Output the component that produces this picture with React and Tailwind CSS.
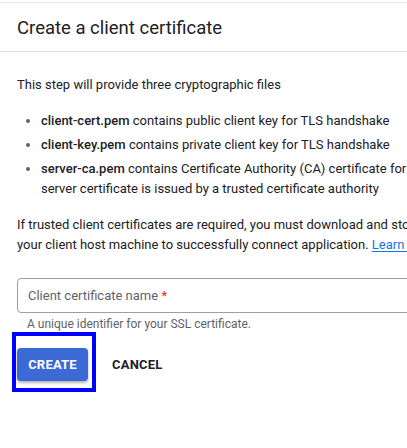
export default function App() {
  return (
    <div className="relative w-[407px] h-[448px] overflow-hidden bg-white text-[#202124] font-['Roboto',sans-serif]">
      <div className="h-[2px]" />
      <div className="h-px bg-[#f6e1e8]" />
      <div className="w-[560px]">
        <div className="px-[17px] pt-[11px] pb-[9px] border-b border-[#e0e0e0]">
          <h1 className="text-[18.5px] leading-[28px] font-normal">Create a client certificate</h1>
        </div>

        <div className="px-[17px] pt-[23px] text-[13px] leading-[20px]">
          <p>This step will provide three cryptographic files</p>

          <ul className="mt-[16px] pl-[24px] list-disc marker:text-[#5f6368] space-y-[4px]">
            <li>
              <b className="font-medium">client-cert.pem</b> contains public client key for TLS handshake
            </li>
            <li>
              <b className="font-medium">client-key.pem</b> contains private client key for TLS handshake
            </li>
            <li className="whitespace-nowrap">
              <b className="font-medium">server-ca.pem</b> contains Certificate Authority (CA) certificate for verifying the
              <br />
              server certificate is issued by a trusted certificate authority
            </li>
          </ul>

          <p className="mt-[16px] whitespace-nowrap">
            If trusted client certificates are required, you must download and store them on
            <br />
            your client host machine to successfully connect application.{' '}
            <a className="text-[#1a73e8] underline underline-offset-2">Learn more</a>
          </p>

          <div className="mt-[23px] h-[35px] rounded-[4px] border border-[#9aa0a6] flex items-center px-[10px]">
            <span className="text-[13px] text-[#5f6368]">
              Client certificate name <span className="text-[#d93025]">*</span>
            </span>
          </div>
          <p className="mt-[3px] pl-[10px] text-[12px] leading-[16px] text-[#5f6368]">
            A unique identifier for your SSL certificate.
          </p>

          <div className="mt-[16px] flex items-center gap-[24px]">
            <button className="w-[71px] h-[33px] rounded-[4px] bg-[#3b6ad6] text-white text-[13px] font-bold tracking-[0.2px] shadow-[0_2px_3px_rgba(0,0,0,0.3)]">
              CREATE
            </button>
            <button className="text-[13px] font-bold text-[#202124] tracking-[0.2px]">CANCEL</button>
          </div>
        </div>
      </div>

      <div className="absolute left-[12px] top-[332px] w-[84px] h-[60px] border-[4px] border-[#0000ff] pointer-events-none" />
    </div>
  );
}
